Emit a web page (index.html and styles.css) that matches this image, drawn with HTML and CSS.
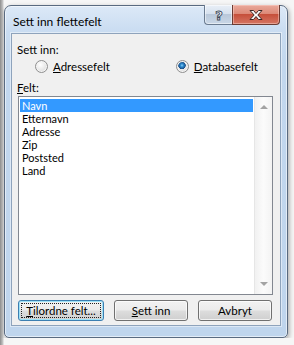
FILE: index.html
```html
<!DOCTYPE html>
<html lang="no">
<head>
  <meta charset="UTF-8" />
  <title>Sett inn flettefelt</title>
  <link rel="stylesheet" href="styles.css">
</head>
<body>
  <div class="window">
    <div class="titlebar">
      <span class="title">Sett inn flettefelt</span>
      <div class="caption-buttons">
        <span class="cap-btn help">
          <svg width="12" height="14" viewBox="0 0 12 14">
            <text x="6" y="12" text-anchor="middle" class="help-glyph">?</text>
          </svg>
        </span>
        <span class="cap-btn close">
          <svg width="16" height="12" viewBox="0 0 16 12">
            <path d="M2 1.5h3.5L8 4.5l2.5-3H14L9.8 6 14 10.5h-3.5L8 7.5l-2.5 3H2L6.2 6z" fill="#fff" stroke="#3b2724" stroke-width="1" stroke-linejoin="round"/>
          </svg>
        </span>
      </div>
    </div>

    <div class="client">
      <div class="label">Sett inn:</div>
      <div class="radios">
        <label class="radio"><span class="radio-circle"></span><span><u>A</u>dressefelt</span></label>
        <label class="radio second"><span class="radio-circle checked"></span><span><u>D</u>atabasefelt</span></label>
      </div>
      <div class="label felt"><u>F</u>elt:</div>

      <div class="listbox">
        <ul class="items">
          <li class="selected">Navn</li>
          <li>Etternavn</li>
          <li>Adresse</li>
          <li>Zip</li>
          <li>Poststed</li>
          <li>Land</li>
        </ul>
        <div class="scrollbar">
          <span class="arrow up"></span>
          <span class="arrow down"></span>
        </div>
      </div>

      <div class="buttons">
        <button class="btn default"><span class="focus"><u>T</u>ilordne felt...</span></button>
        <button class="btn"><u>S</u>ett inn</button>
        <button class="btn">Avbryt</button>
      </div>
    </div>
  </div>
</body>
</html>
```

FILE: styles.css
```css
body {
  margin: 0;
  padding: 5px 0 0 4px;
  background: linear-gradient(to right, #8d8d8d 0, #c9c9c9 3px, #f6f6f6 4px);
  font-family: Lato, 'Noto Sans', sans-serif;
  font-size: 11.5px;
  color: #000;
}
.window {
  box-sizing: border-box;
  width: 284px;
  height: 333px;
  border: 1px solid #596a80;
  border-radius: 7px 7px 5px 5px;
  background: linear-gradient(#dce9f7 0, #c9dcf1 26px, #c2d7ee 60px, #bfd5ed 100%);
  box-shadow: inset 0 0 0 1px rgba(255,255,255,0.55), 1px 2px 5px rgba(0,0,0,0.35);
  display: flex;
  flex-direction: column;
}
.titlebar {
  height: 27px;
  display: flex;
  justify-content: space-between;
  align-items: flex-start;
}
.title {
  padding: 8px 0 0 8px;
  line-height: 15px;
  font-size: 12px;
}
.caption-buttons {
  display: flex;
  margin-right: 7px;
  margin-top: -1px;
}
.cap-btn {
  box-sizing: border-box;
  height: 20px;
  display: flex;
  align-items: center;
  justify-content: center;
  border: 1px solid #6a7b90;
  border-top: none;
}
.help {
  width: 28px;
  border-right: none;
  border-radius: 0 0 0 4px;
  background: linear-gradient(#e9eff7 0, #d6e1ee 45%, #b9c8da 50%, #c9d7e7 100%);
  box-shadow: inset 0 0 0 1px rgba(255,255,255,0.5);
}
.help-glyph {
  font-family: 'DejaVu Sans', sans-serif;
  font-size: 13px;
  font-weight: bold;
  fill: #fff;
  stroke: #3d4a5a;
  stroke-width: 0.9px;
}
.close {
  width: 48px;
  border-color: #6b3b33;
  border-radius: 0 0 4px 0;
  background: linear-gradient(#eaa99b 0, #dd8a78 45%, #c6503b 50%, #d57563 100%);
  box-shadow: inset 0 0 0 1px rgba(255,220,210,0.45);
}
.client {
  flex: 1;
  margin: 0 6px 11px;
  border: 1px solid #8ea3bc;
  background: #f0f0f0;
  box-shadow: 0 0 0 1px rgba(255,255,255,0.45);
  padding: 8px 0 4px;
  display: flex;
  flex-direction: column;
}
.label {
  padding-left: 5px;
  line-height: 15px;
}
.radios {
  margin-top: 1px;
  height: 17px;
  display: flex;
  align-items: center;
}
.radio {
  display: flex;
  align-items: center;
  gap: 5px;
  line-height: 15px;
  margin-left: 23px;
}
.radio.second {
  margin-left: 66px;
}
.radio-circle {
  box-sizing: border-box;
  width: 13px;
  height: 13px;
  border-radius: 50%;
  border: 1px solid #8f8f8f;
  background: radial-gradient(circle at 40% 35%, #ffffff 0, #f2f2f2 30%, #d2d2d2 100%);
  box-shadow: inset 0 0 0 1px #f4f4f4;
}
.radio-circle.checked {
  background:
    radial-gradient(circle at 45% 40%, #8fd0f7 0, #2c8bd0 1.5px, #1a4d86 3.5px, transparent 4px),
    radial-gradient(circle at 40% 35%, #ffffff 0, #f2f2f2 30%, #d2d2d2 100%);
}
.felt {
  margin-top: 5px;
}
.listbox {
  box-sizing: border-box;
  margin: 1px 0 0 6px;
  width: 255px;
  height: 199px;
  border: 1px solid #828790;
  background: #fff;
  display: flex;
}
.items {
  list-style: none;
  margin: 0;
  padding: 2px 1px 0;
  flex: 1;
  font-size: 11px;
}
.items li {
  height: 13px;
  line-height: 13px;
  padding-left: 2px;
}
.items li.selected {
  background: #3399ff;
  color: #fff;
}
.scrollbar {
  width: 17px;
  border-left: 1px solid #e6e6e6;
  background: linear-gradient(to right, #f1f1f1, #fbfbfb 50%, #f3f3f3);
  display: flex;
  flex-direction: column;
  justify-content: space-between;
  align-items: center;
  padding: 8px 0;
}
.arrow {
  width: 0;
  height: 0;
  border-left: 4px solid transparent;
  border-right: 4px solid transparent;
}
.arrow.up {
  border-bottom: 4px solid #a3a3a3;
}
.arrow.down {
  border-top: 4px solid #a3a3a3;
}
.buttons {
  margin: 5px 0 0 6px;
  display: flex;
  gap: 10px;
}
.btn {
  box-sizing: border-box;
  height: 21px;
  width: 74px;
  padding: 0;
  border: 1px solid #707070;
  border-radius: 3px;
  background: linear-gradient(#f2f2f2 0, #ebebeb 48%, #dddddd 52%, #cfcfcf 100%);
  box-shadow: inset 0 0 0 1px rgba(255,255,255,0.7);
  font-family: inherit;
  font-size: 11.5px;
  color: #000;
}
.btn.default {
  width: 86px;
  border-color: #3c7fb1;
  box-shadow: inset 0 0 0 1px #9fe2f7;
  padding: 2px;
}
.focus {
  display: block;
  height: 100%;
  box-sizing: border-box;
  border: 1px dotted #222;
  line-height: 13px;
}
```
